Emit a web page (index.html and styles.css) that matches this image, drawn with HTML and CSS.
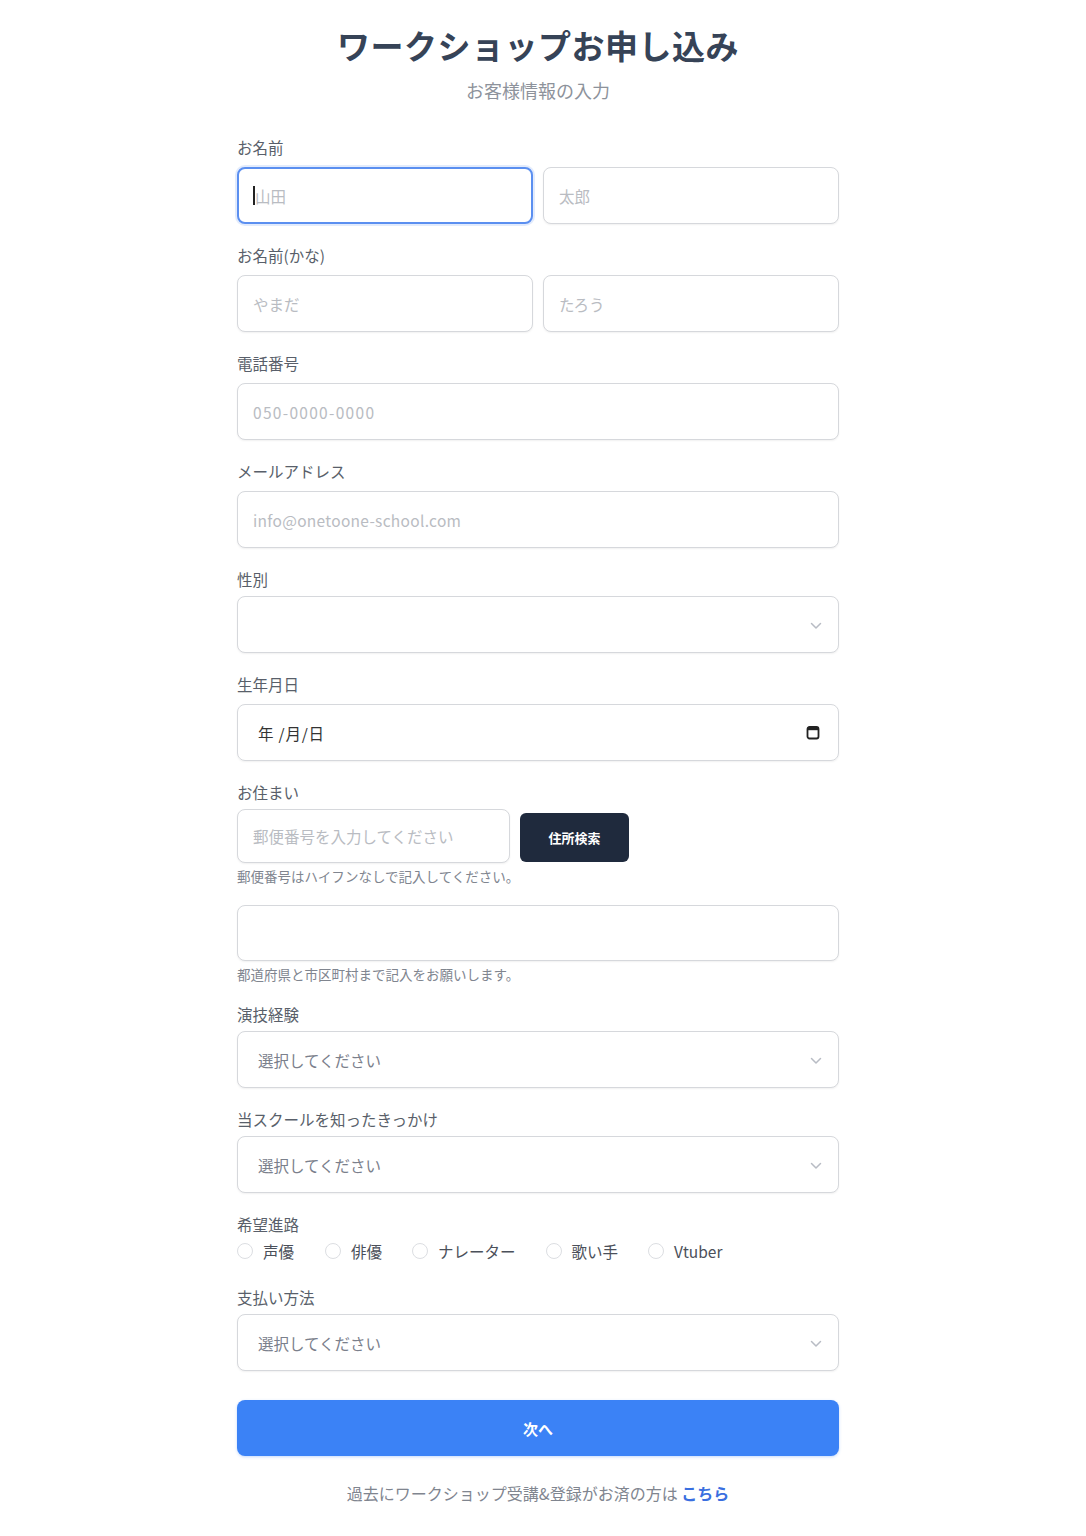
FILE: index.html
```html
<!DOCTYPE html>
<html lang="ja">
<head>
<meta charset="utf-8">
<title>ワークショップお申し込み</title>
<link rel="stylesheet" href="styles.css">
</head>
<body>
<main class="page">
  <h1 class="title">ワークショップお申し込み</h1>
  <p class="subtitle">お客様情報の入力</p>

  <form class="form">
    <div class="field first">
      <div class="label">お名前</div>
      <div class="row two">
        <div class="focus-wrap">
          <input class="input focused" type="text" placeholder="山田">
          <span class="caret"></span>
        </div>
        <input class="input" type="text" placeholder="太郎">
      </div>
    </div>

    <div class="field">
      <div class="label">お名前(かな)</div>
      <div class="row two">
        <input class="input" type="text" placeholder="やまだ">
        <input class="input" type="text" placeholder="たろう">
      </div>
    </div>

    <div class="field">
      <div class="label">電話番号</div>
      <input class="input wide-ph" type="text" placeholder="050-0000-0000">
    </div>

    <div class="field">
      <div class="label">メールアドレス</div>
      <input class="input mail-ph" type="text" placeholder="info@onetoone-school.com">
    </div>

    <div class="field">
      <div class="label tight">性別</div>
      <div class="select-wrap">
        <select class="select"><option></option></select>
        <svg class="chev" width="12" height="8" viewBox="0 0 12 8"><path d="M1.5 1.5 L6 6 L10.5 1.5" fill="none" stroke="#b8bcc4" stroke-width="1.5" stroke-linecap="round" stroke-linejoin="round"/></svg>
      </div>
    </div>

    <div class="field">
      <div class="label">生年月日</div>
      <div class="date">
        <span class="date-text">年 /月/日</span>
        <svg class="cal" width="14" height="15" viewBox="0 0 14 15"><rect x="1.5" y="2" width="11" height="11.5" rx="2" fill="none" stroke="#222" stroke-width="1.8"/><rect x="1.5" y="2" width="11" height="3.2" fill="#222"/></svg>
      </div>
    </div>

    <div class="field">
      <div class="label tight">お住まい</div>
      <div class="row postal">
        <input class="input short" type="text" placeholder="郵便番号を入力してください">
        <button class="search-btn" type="button">住所検索</button>
      </div>
      <div class="help">郵便番号はハイフンなしで記入してください。</div>
      <input class="input addr" type="text">
      <div class="help">都道府県と市区町村まで記入をお願いします。</div>
    </div>

    <div class="field">
      <div class="label tight">演技経験</div>
      <div class="select-wrap">
        <select class="select muted"><option>選択してください</option></select>
        <svg class="chev" width="12" height="8" viewBox="0 0 12 8"><path d="M1.5 1.5 L6 6 L10.5 1.5" fill="none" stroke="#b8bcc4" stroke-width="1.5" stroke-linecap="round" stroke-linejoin="round"/></svg>
      </div>
    </div>

    <div class="field">
      <div class="label tight">当スクールを知ったきっかけ</div>
      <div class="select-wrap">
        <select class="select muted"><option>選択してください</option></select>
        <svg class="chev" width="12" height="8" viewBox="0 0 12 8"><path d="M1.5 1.5 L6 6 L10.5 1.5" fill="none" stroke="#b8bcc4" stroke-width="1.5" stroke-linecap="round" stroke-linejoin="round"/></svg>
      </div>
    </div>

    <div class="field">
      <div class="label tight">希望進路</div>
      <div class="radios">
        <label class="radio"><input type="radio" name="course"><span>声優</span></label>
        <label class="radio"><input type="radio" name="course"><span>俳優</span></label>
        <label class="radio"><input type="radio" name="course"><span>ナレーター</span></label>
        <label class="radio"><input type="radio" name="course"><span>歌い手</span></label>
        <label class="radio"><input type="radio" name="course"><span>Vtuber</span></label>
      </div>
    </div>

    <div class="field pay">
      <div class="label tight">支払い方法</div>
      <div class="select-wrap">
        <select class="select muted"><option>選択してください</option></select>
        <svg class="chev" width="12" height="8" viewBox="0 0 12 8"><path d="M1.5 1.5 L6 6 L10.5 1.5" fill="none" stroke="#b8bcc4" stroke-width="1.5" stroke-linecap="round" stroke-linejoin="round"/></svg>
      </div>
    </div>

    <button class="next-btn" type="button">次へ</button>

    <p class="footer">過去にワークショップ受講&amp;登録がお済の方は <a class="link" href="#">こちら</a></p>
  </form>
</main>
</body>
</html>
```

FILE: styles.css
```css
* { box-sizing: border-box; }

html, body {
  margin: 0;
  padding: 0;
  background: #ffffff;
}

body {
  font-family: "Noto Sans CJK JP", "Noto Sans", "Liberation Sans", sans-serif;
  color: #374151;
  padding-right: 10px;
}

.page {
  width: 602px;
  margin: 0 auto;
  padding-top: 25px;
}

.title {
  margin: 0;
  font-size: 33px;
  line-height: 40px;
  font-weight: 700;
  text-align: center;
  color: #364357;
  letter-spacing: 0.5px;
}

.subtitle {
  margin: 13px 0 0;
  font-size: 18px;
  line-height: 24px;
  text-align: center;
  color: #8d929b;
}

.form {
  display: flex;
  flex-direction: column;
}

.field {
  margin-top: 21px;
  display: flex;
  flex-direction: column;
}

.field.first { margin-top: 35px; }
.field.pay { margin-top: 26px; }

.label {
  height: 20px;
  line-height: 20px;
  font-size: 15.5px;
  color: #595f6a;
  margin-bottom: 10px;
}

.label.tight { margin-bottom: 7px; }

.row {
  display: flex;
  gap: 10px;
}

.row.two {
  display: grid;
  grid-template-columns: 1fr 1fr;
  gap: 10px;
}

.input {
  display: block;
  width: 100%;
  min-width: 0;
  height: 57px;
  border: 1px solid #d6d8dc;
  border-radius: 8px;
  padding: 0 15px;
  font-family: inherit;
  font-size: 15.5px;
  color: #333;
  background: #fff;
  box-shadow: 0 1px 2px rgba(0, 0, 0, 0.06);
  outline: none;
}

.input::placeholder { color: #b9bcc2; }

.input.wide-ph::placeholder { letter-spacing: 1.3px; }
.input.mail-ph::placeholder { letter-spacing: 0.3px; }

.focus-wrap {
  position: relative;
  min-width: 0;
}

.input.focused {
  border: 2px solid #5b8ff0;
  padding-left: 14px;
  box-shadow: 0 0 0 2px rgba(96, 146, 240, 0.18);
}

.caret {
  position: absolute;
  left: 16px;
  top: 19px;
  width: 2px;
  height: 19px;
  background: #222;
}

.focus-wrap .input::placeholder { text-indent: 2px; }

.select-wrap {
  position: relative;
}

.select {
  display: block;
  width: 100%;
  height: 57px;
  border: 1px solid #d6d8dc;
  border-radius: 8px;
  padding: 0 40px 0 20px;
  font-family: inherit;
  font-size: 15.5px;
  color: #333;
  background: #fff;
  box-shadow: 0 1px 2px rgba(0, 0, 0, 0.06);
  appearance: none;
  -webkit-appearance: none;
  outline: none;
}

.select.muted { color: #7b808c; }

.chev {
  position: absolute;
  right: 17px;
  top: 26px;
  pointer-events: none;
}

.date {
  height: 57px;
  border: 1px solid #d6d8dc;
  border-radius: 8px;
  padding: 0 18px 0 20px;
  display: flex;
  align-items: center;
  justify-content: space-between;
  box-shadow: 0 1px 2px rgba(0, 0, 0, 0.06);
}

.date-text {
  font-size: 15.5px;
  color: #333;
  letter-spacing: 0.8px;
}

.postal {
  align-items: center;
}

.input.short {
  width: 273px;
  height: 54px;
  flex: none;
}

.search-btn {
  width: 109px;
  height: 49px;
  border: none;
  border-radius: 6px;
  background: #1f2a3d;
  color: #ffffff;
  font-family: inherit;
  font-size: 13px;
  font-weight: 700;
  margin-top: 2px;
}

.help {
  margin-top: 4px;
  font-size: 13.5px;
  line-height: 18px;
  color: #80858f;
}

.input.addr {
  margin-top: 20px;
  height: 56px;
}

.radios {
  display: flex;
  align-items: center;
  height: 20px;
}

.radio {
  display: flex;
  align-items: center;
  font-size: 15.5px;
  color: #4b505a;
}

.radio:nth-child(1) { margin-right: 31px; }
.radio:nth-child(2) { margin-right: 30px; }
.radio:nth-child(3) { margin-right: 30px; }
.radio:nth-child(4) { margin-right: 30px; }

.radio input {
  appearance: none;
  -webkit-appearance: none;
  width: 16px;
  height: 16px;
  margin: 0 10px 0 0;
  border: 1px solid #dcdee2;
  border-radius: 50%;
  background: #fff;
}

.next-btn {
  margin-top: 29px;
  height: 56px;
  width: 100%;
  border: none;
  border-radius: 8px;
  background: #3b82f6;
  color: #ffffff;
  font-family: inherit;
  font-size: 15px;
  font-weight: 700;
  box-shadow: 0 1px 3px rgba(59, 130, 246, 0.3);
}

.footer {
  margin: 27px 0 0;
  text-align: center;
  font-size: 16px;
  line-height: 20px;
  color: #80858f;
}

.link {
  color: #3a6fe0;
  font-weight: 700;
  text-decoration: none;
}
```
